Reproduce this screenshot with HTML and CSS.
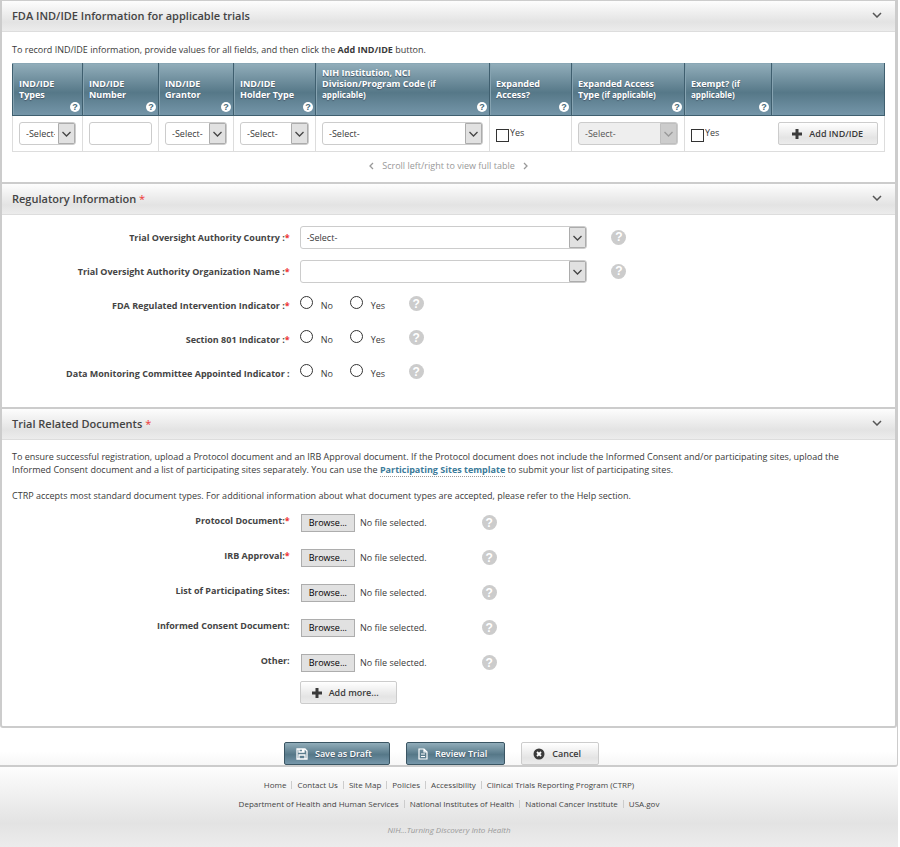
FILE: index.html
```html
<!DOCTYPE html>
<html lang="en">
<head>
<meta charset="utf-8">
<title>Register Trial</title>
<link rel="stylesheet" href="styles.css">
</head>
<body>
<svg width="0" height="0" class="sprite" aria-hidden="true">
  <symbol id="chevron" viewBox="0 0 10 6"><path d="M1 1l4 4 4-4" fill="none" stroke="currentColor" stroke-width="1.5"/></symbol>
  <symbol id="left" viewBox="0 0 5 8"><path d="M4 1L1 4l3 3" fill="none" stroke="currentColor" stroke-width="1.3"/></symbol>
  <symbol id="right" viewBox="0 0 5 8"><path d="M1 1l3 3-3 3" fill="none" stroke="currentColor" stroke-width="1.3"/></symbol>
  <symbol id="plus" viewBox="0 0 10 10"><path d="M5 0v10M0 5h10" stroke="currentColor" stroke-width="3"/></symbol>
  <symbol id="save" viewBox="0 0 12 12"><path d="M1 1h8l2 2v8H1zM3 1v3h5V1M3 11V7h6v4" fill="none" stroke="currentColor" stroke-width="1.3"/><path d="M6 1h2v3H6z" fill="currentColor"/></symbol>
  <symbol id="doc" viewBox="0 0 10 12"><path d="M1 1h5l3 3v7H1zM6 1v3h3M3 6h4M3 8.500h4" fill="none" stroke="currentColor" stroke-width="1.200"/></symbol>
  <symbol id="cancel" viewBox="0 0 12 12"><circle cx="6" cy="6" r="5.500" fill="currentColor"/><path d="M4 4l4 4M8 4l-4 4" stroke="#fff" stroke-width="1.800"/></symbol>
</svg>

<main class="wrapper">
  <section class="panel">
    <div class="panel-heading">
      <h3>FDA IND/IDE Information for applicable trials</h3>
      <button type="button" class="toggle" aria-label="Collapse"><svg width="10" height="6"><use href="#chevron"/></svg></button>
    </div>
    <div class="panel-body">
      <p class="intro">To record IND/IDE information, provide values for all fields, and then click the <b>Add IND/IDE</b> button.</p>
      <table class="ind">
        <colgroup>
          <col class="c-types"><col class="c-number"><col class="c-grantor"><col class="c-holder"><col>
          <col class="c-holder"><col class="c-access"><col class="c-exempt"><col class="c-access">
        </colgroup>
        <thead>
          <tr>
            <th>IND/IDE<br>Types <button type="button" class="help">?</button></th>
            <th>IND/IDE<br>Number <button type="button" class="help">?</button></th>
            <th>IND/IDE<br>Grantor <button type="button" class="help">?</button></th>
            <th>IND/IDE<br>Holder Type <button type="button" class="help">?</button></th>
            <th>NIH Institution, NCI<br>Division/Program Code <small>(if<br>applicable)</small> <button type="button" class="help">?</button></th>
            <th>Expanded<br>Access? <button type="button" class="help">?</button></th>
            <th>Expanded Access<br>Type <small>(if applicable)</small> <button type="button" class="help">?</button></th>
            <th>Exempt? <small>(if<br>applicable)</small> <button type="button" class="help">?</button></th>
            <th></th>
          </tr>
        </thead>
        <tbody>
          <tr>
            <td><select aria-label="IND/IDE Types"><option>-Select-</option></select></td>
            <td><input type="text" aria-label="IND/IDE Number"></td>
            <td><select aria-label="IND/IDE Grantor"><option>-Select-</option></select></td>
            <td><select aria-label="IND/IDE Holder Type"><option>-Select-</option></select></td>
            <td><select aria-label="NIH Institution, NCI Division/Program Code"><option>-Select-</option></select></td>
            <td><label class="check"><input type="checkbox">Yes</label></td>
            <td><select aria-label="Expanded Access Type" disabled><option>-Select-</option></select></td>
            <td><label class="check"><input type="checkbox">Yes</label></td>
            <td><button type="button" class="btn btn-block"><svg width="10" height="10"><use href="#plus"/></svg>Add IND/IDE</button></td>
          </tr>
        </tbody>
      </table>
      <p class="scroll-hint"><svg width="5" height="8"><use href="#left"/></svg>Scroll left/right to view full table<svg width="5" height="8"><use href="#right"/></svg></p>
    </div>
  </section>

  <section class="panel">
    <div class="panel-heading">
      <h3>Regulatory Information <span class="req">*</span></h3>
      <button type="button" class="toggle" aria-label="Collapse"><svg width="10" height="6"><use href="#chevron"/></svg></button>
    </div>
    <div class="form">
      <div class="row">
        <label class="name" for="country">Trial Oversight Authority Country :<span class="req">*</span></label>
        <div class="field"><select id="country"><option>-Select-</option></select></div>
        <button type="button" class="help">?</button>
      </div>
      <div class="row">
        <label class="name" for="org">Trial Oversight Authority Organization Name :<span class="req">*</span></label>
        <div class="field"><select id="org"><option></option></select></div>
        <button type="button" class="help">?</button>
      </div>
      <div class="row" role="radiogroup" aria-labelledby="fda">
        <span class="name" id="fda">FDA Regulated Intervention Indicator :<span class="req">*</span></span>
        <div class="radios">
          <label><input type="radio" name="fda">No</label>
          <label><input type="radio" name="fda">Yes</label>
          <button type="button" class="help">?</button>
        </div>
      </div>
      <div class="row" role="radiogroup" aria-labelledby="s801">
        <span class="name" id="s801">Section 801 Indicator :<span class="req">*</span></span>
        <div class="radios">
          <label><input type="radio" name="s801">No</label>
          <label><input type="radio" name="s801">Yes</label>
          <button type="button" class="help">?</button>
        </div>
      </div>
      <div class="row" role="radiogroup" aria-labelledby="dmc">
        <span class="name" id="dmc">Data Monitoring Committee Appointed Indicator :</span>
        <div class="radios">
          <label><input type="radio" name="dmc">No</label>
          <label><input type="radio" name="dmc">Yes</label>
          <button type="button" class="help">?</button>
        </div>
      </div>
    </div>
  </section>

  <section class="panel">
    <div class="panel-heading">
      <h3>Trial Related Documents <span class="req">*</span></h3>
      <button type="button" class="toggle" aria-label="Collapse"><svg width="10" height="6"><use href="#chevron"/></svg></button>
    </div>
    <div class="panel-body docs-text">
      <p>To ensure successful registration, upload a Protocol document and an IRB Approval document. If the Protocol document does not include the Informed Consent and/or participating sites, upload the Informed Consent document and a list of participating sites separately. You can use the <a href="#">Participating Sites template</a> to submit your list of participating sites.</p>
      <p>CTRP accepts most standard document types. For additional information about what document types are accepted, please refer to the Help section.</p>
    </div>
    <div class="files">
      <div class="row">
        <label class="name" for="protocol">Protocol Document:<span class="req">*</span></label>
        <div class="file"><input type="file" id="protocol" hidden><button type="button" class="browse">Browse...</button><span>No file selected.</span></div>
        <button type="button" class="help">?</button>
      </div>
      <div class="row">
        <label class="name" for="irb">IRB Approval:<span class="req">*</span></label>
        <div class="file"><input type="file" id="irb" hidden><button type="button" class="browse">Browse...</button><span>No file selected.</span></div>
        <button type="button" class="help">?</button>
      </div>
      <div class="row">
        <label class="name" for="sites">List of Participating Sites:</label>
        <div class="file"><input type="file" id="sites" hidden><button type="button" class="browse">Browse...</button><span>No file selected.</span></div>
        <button type="button" class="help">?</button>
      </div>
      <div class="row">
        <label class="name" for="consent">Informed Consent Document:</label>
        <div class="file"><input type="file" id="consent" hidden><button type="button" class="browse">Browse...</button><span>No file selected.</span></div>
        <button type="button" class="help">?</button>
      </div>
      <div class="row">
        <label class="name" for="other">Other:</label>
        <div class="file"><input type="file" id="other" hidden><button type="button" class="browse">Browse...</button><span>No file selected.</span></div>
        <button type="button" class="help">?</button>
      </div>
      <div class="more">
        <button type="button" class="btn"><svg width="10" height="10"><use href="#plus"/></svg>Add more...</button>
      </div>
    </div>
  </section>

  <div class="actions">
    <button type="button" class="btn btn-primary"><svg width="12" height="12"><use href="#save"/></svg>Save as Draft</button>
    <button type="button" class="btn btn-primary"><svg width="10" height="12"><use href="#doc"/></svg>Review Trial</button>
    <button type="button" class="btn"><svg width="12" height="12"><use href="#cancel"/></svg>Cancel</button>
  </div>
</main>

<footer>
  <ul>
    <li><a href="#">Home</a></li>
    <li><a href="#">Contact Us</a></li>
    <li><a href="#">Site Map</a></li>
    <li><a href="#">Policies</a></li>
    <li><a href="#">Accessibility</a></li>
    <li><a href="#">Clinical Trials Reporting Program (CTRP)</a></li>
  </ul>
  <ul>
    <li><a href="#">Department of Health and Human Services</a></li>
    <li><a href="#">National Institutes of Health</a></li>
    <li><a href="#">National Cancer Institute</a></li>
    <li><a href="#">USA.gov</a></li>
  </ul>
  <p>NIH...Turning Discovery Into Health</p>
</footer>

<script>
document.querySelectorAll('.file').forEach(function (box) {
  var input = box.querySelector('input');
  box.querySelector('.browse').onclick = function () { input.click(); };
  input.onchange = function () {
    box.querySelector('span').textContent = input.files.length ? input.files[0].name : 'No file selected.';
  };
});
</script>
</body>
</html>
```
FILE: styles.css
```css
* { box-sizing: border-box; }

body {
  margin: 0 2px 0 0;
  font-family: "Open Sans", Arial, sans-serif;
  font-size: 9px;
  line-height: 13px;
  color: #3a3a3a;
  background: #fff;
}

p, h3, ul { margin: 0; padding: 0; }

button, input, select { font: inherit; color: inherit; }

.sprite { position: absolute; }

.wrapper {
  border-right: 1px solid #ccc;
  border-bottom: 2px solid #ccc;
  border-radius: 0 0 3px 0;
  background: linear-gradient(to top, #f7f7f7, #fff 14px);
}

/* panels */
.panel {
  border: 2px solid #ccc;
  border-bottom: 0;
  background: #fff;
}

.panel:first-child { border-top-width: 1px; }

.panel:nth-of-type(3) {
  border-bottom: 2px solid #ccc;
  border-radius: 0 0 3px 3px;
}

.panel-heading {
  display: flex;
  align-items: center;
  justify-content: space-between;
  height: 31px;
  padding: 0 13px 2px 10px;
  border-bottom: 1px solid #ddd;
  background: linear-gradient(#fdfdfd, #e3e3e3 70%, #ececec);
}

.panel-heading h3 {
  font-size: 11px;
  font-weight: 600;
  line-height: 15px;
  color: #444;
}

.toggle {
  display: flex;
  padding: 0;
  border: 0;
  background: none;
  color: #555;
  cursor: pointer;
}

.req { color: #e33; }

h3 .req { font-weight: 400; }

.panel-body { padding: 11px 10px 10px; }

.intro { margin-bottom: 7px; }

/* IND/IDE table */
.ind {
  width: 100%;
  table-layout: fixed;
  border-collapse: collapse;
}

.c-types { width: 70px; }
.c-number { width: 76px; }
.c-grantor { width: 75px; }
.c-holder { width: 82px; }
.c-access { width: 113px; }
.c-exempt { width: 87px; }

.ind thead tr { background: linear-gradient(#91adba, #567888 55%, #7697aa); }

.ind th {
  height: 52px;
  padding: 2px 2px 3px 6px;
  border: 1px solid #3f5f6f;
  border-top-color: #8aa7b5;
  box-shadow: inset 1px 0 #86a3b1;
  vertical-align: bottom;
  text-align: left;
  line-height: 11px;
  color: #fff;
  text-shadow: 0 1px 1px #456;
}

.ind small { font-size: 8px; }

.ind td {
  padding: 6px;
  border: 1px solid #ddd;
}

.ind td:nth-child(9) { border-left: 0; }
.ind td:nth-child(8) { border-right: 0; }

.help {
  display: flex;
  align-items: center;
  justify-content: center;
  width: 15px;
  height: 15px;
  padding: 0;
  border: 0;
  border-radius: 50%;
  background: #ccc;
  color: #fff;
  font: bold 12px "Liberation Sans", Arial, sans-serif;
  cursor: pointer;
}

.ind .help {
  width: 10px;
  height: 10px;
  margin: 2px 0 0 auto;
  background: #fff;
  color: #456878;
  font-size: 9px;
}

select, input[type=text] {
  display: block;
  width: 100%;
  height: 23px;
  padding: 0 20px 0 6px;
  border: 1px solid #ccc;
  border-radius: 3px;
  background-color: #fff;
}

select {
  appearance: none;
  background-image: url("data:image/svg+xml,%3Csvg xmlns='http://www.w3.org/2000/svg' width='17' height='21'%3E%3Cpath d='M.5.5h16v20H.5z' fill='%23e1e1e1' stroke='%23acacac'/%3E%3Cpath d='M4.500 9l4 4 4-4' fill='none' stroke='%23444' stroke-width='1.300'/%3E%3C/svg%3E");
  background-repeat: no-repeat;
  background-position: right center;
}

select:disabled {
  background-color: #eee;
  background-image: url("data:image/svg+xml,%3Csvg xmlns='http://www.w3.org/2000/svg' width='17' height='21'%3E%3Cpath d='M.5.5h16v20H.5z' fill='%23ccc' stroke='%23bfbfbf'/%3E%3Cpath d='M4.500 9l4 4 4-4' fill='none' stroke='%23999' stroke-width='1.300'/%3E%3C/svg%3E");
  color: #555;
  opacity: 1;
}

.check {
  display: flex;
  align-items: flex-start;
  gap: 1px;
}

.check input {
  appearance: none;
  width: 13px;
  height: 13px;
  margin: 3px 0 0;
  border: 1px solid #333;
  background: #fff;
}

.check input:checked { background: #333; }

.scroll-hint {
  display: flex;
  align-items: center;
  justify-content: center;
  gap: 8px;
  margin-top: 7px;
  color: #999;
}

/* form rows */
.form { padding: 5px 0 17px; }

.row {
  display: flex;
  align-items: center;
  min-height: 34px;
}

.name {
  width: 33.333%;
  padding-right: 10px;
  text-align: right;
  font-weight: bold;
  color: #444;
}

.field {
  width: 33.333%;
  padding-right: 10px;
}

.field + .help { margin-left: 14px; }

.radios {
  display: flex;
  align-items: flex-start;
}

.radios label {
  display: flex;
  align-items: flex-end;
  gap: 8px;
  width: 50px;
  height: 18px;
  padding-bottom: 2px;
}

.radios input {
  appearance: none;
  width: 13px;
  height: 13px;
  margin: 0 0 3px;
  border: 1px solid #333;
  border-radius: 50%;
  background: #fff;
}

.radios input:checked { box-shadow: inset 0 0 0 3px #fff, inset 0 0 0 9px #333; }

.radios .help { margin-left: 9px; }

/* documents */
.docs-text { padding: 10px 30px 3px 10px; }

.docs-text p + p { margin-top: 13px; }

.docs-text a {
  border-bottom: 1px dotted #999;
  color: #3c7a99;
  font-weight: bold;
  text-decoration: none;
}

.files .row { min-height: 35px; }

.files .name { padding-bottom: 4px; }

.file {
  display: flex;
  align-items: center;
  gap: 5px;
  width: 182px;
  padding-left: 1px;
}

.browse {
  height: 18px;
  padding: 0 7px;
  border: 1px solid #adadad;
  background: #e1e1e1;
  color: #000;
}

.more { padding: 1px 0 22px 33.333%; }

/* buttons */
.btn {
  display: inline-flex;
  align-items: center;
  justify-content: center;
  gap: 7px;
  height: 23px;
  padding: 0 17px 0 11px;
  border: 1px solid #ccc;
  border-radius: 2px;
  background: linear-gradient(#fff, #e4e4e4 70%, #ececec);
  font-weight: 600;
  cursor: pointer;
}

.btn-block {
  width: 100%;
  padding: 0 6px;
}

.btn-primary {
  border-color: #3a5563;
  background: linear-gradient(#91adba, #567888 55%, #7697aa);
  color: #fff;
  text-shadow: 0 1px 1px #456;
}

.actions {
  display: flex;
  justify-content: center;
  gap: 16px;
  padding: 14px 14px 0 0;
}

/* footer */
footer {
  min-height: 80px;
  padding: 11px 0 8px;
  background: linear-gradient(#fdfdfd, #e3e3e3 70%, #ececec);
  text-align: center;
  font-size: 8px;
}

footer ul {
  display: flex;
  justify-content: center;
  margin-bottom: 6px;
  list-style: none;
}

footer li {
  display: flex;
  align-items: center;
}

footer li + li::before {
  content: "";
  height: 8px;
  margin: 0 5px;
  border-left: 1px solid #ccc;
}

footer a {
  color: #444;
  text-decoration: none;
}

footer p {
  padding-top: 7px;
  color: #999;
  font-style: italic;
}
```
